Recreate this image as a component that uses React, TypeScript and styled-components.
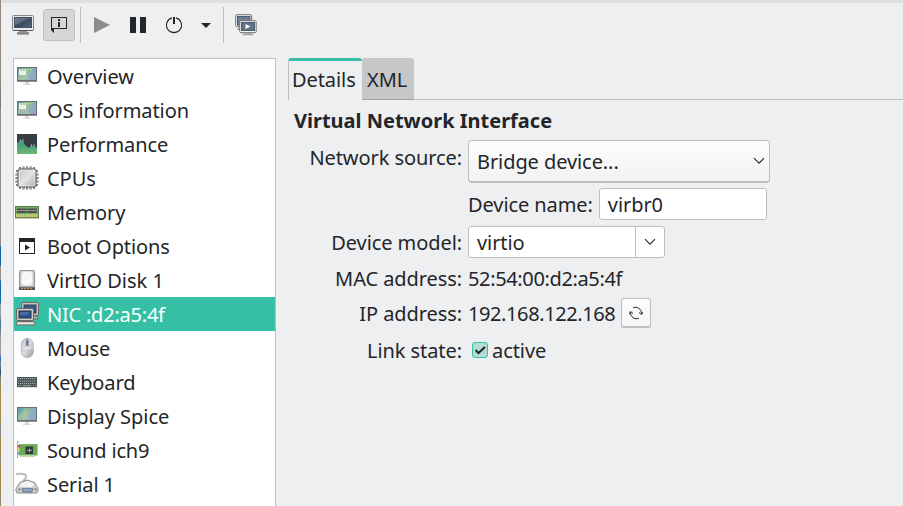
import React from "react";
import styled, { createGlobalStyle } from "styled-components";

const ink = "#232629";
const edge = "#bcbec0";
const accent = "#35bfa4";

const GlobalStyle = createGlobalStyle`
  * { box-sizing: border-box; }
  body { margin: 0; background: #eeeff1; overflow: hidden; }
`;

const Window = styled.div`
  display: grid;
  grid-template-columns: 1px 1fr;
  width: 903px;
  height: 506px;
  overflow: hidden;
  background: #eeeff1;
  color: ${ink};
  font: 20px/34px "Noto Sans", sans-serif;
`;

const DesktopSliver = styled.div`
  background: linear-gradient(
    #94877b 0 85px, #7b7470 105px, #8e8e90 110px 246px, #0c64a0 247px 265px,
    #969188 266px 280px, #1264a8 281px 303px, #9a9da2 304px 316px, #486f92 322px,
    #a09c99 340px 354px, #1b66b8 358px, #72849a 364px, #1f4a73 373px, #8d8778 378px,
    #a08b48 389px 422px, #8f8787 427px 436px, #a18745 440px 454px, #8b8688 458px, #a18745 466px 480px,
    #a18745 492px, #8f8787 497px, #a18745 506px
  );
`;

const Content = styled.div`
  display: flex;
  flex-direction: column;
  min-width: 0;
  border-top: 3px solid #dedfe1;
`;

const Toolbar = styled.div`
  display: flex;
  align-items: flex-start;
  height: 55px;
  padding: 4px 0 0 6px;
`;

const ToolButton = styled.button<{ $pressed?: boolean; $width?: number }>`
  display: flex;
  align-items: center;
  justify-content: center;
  width: ${(p) => p.$width ?? 32}px;
  height: 32px;
  margin: 2px 0;
  padding: 0;
  border: 1px solid ${(p) => (p.$pressed ? edge : "transparent")};
  border-radius: 3px;
  background: ${(p) => (p.$pressed ? "#d5d6d8" : "transparent")};
  svg { flex: none; }
`;

const ViewSwitch = styled.div`
  display: flex;
  gap: 4px;
`;

const Divider = styled.div<{ $left: number; $right: number }>`
  width: 1px;
  height: 36px;
  margin: 0 ${(p) => p.$right}px 0 ${(p) => p.$left}px;
  background: ${edge};
`;

const Panes = styled.div`
  display: grid;
  grid-template-columns: 263px 1fr;
  column-gap: 12px;
  flex: 1;
  min-height: 0;
  padding-left: 12px;
`;

const HardwareList = styled.ul`
  height: 460px;
  margin: 0;
  padding: 0;
  list-style: none;
  background: #fff;
  border: 1px solid ${edge};
  border-bottom: 0;
`;

const HardwareRow = styled.li<{ $selected?: boolean }>`
  display: flex;
  align-items: center;
  gap: 8px;
  height: 34px;
  padding-left: 1px;
  white-space: nowrap;
  color: ${(p) => (p.$selected ? "#fff" : ink)};
  background: ${(p) => (p.$selected ? accent : "transparent")};
  svg { flex: none; }
`;

const RowLabel = styled.span<{ $tracking?: number }>`
  padding-top: 2px;
  letter-spacing: ${(p) => p.$tracking ?? -0.04}px;
`;

const Details = styled.div`
  min-width: 0;
`;

const TabStrip = styled.div`
  display: flex;
  height: 42px;
`;

const TabFiller = styled.div`
  flex: 1;
  border-bottom: 1px solid ${edge};
`;

const Tab = styled.div<{ $active?: boolean; $width: number }>`
  width: ${(p) => p.$width}px;
  height: 42px;
  padding-top: ${(p) => (p.$active ? 2 : 5)}px;
  padding-left: 5px;
  white-space: nowrap;
  border-radius: 3px 3px 0 0;
  ${(p) =>
    p.$active
      ? `border-top: 3px solid ${accent}; border-left: 1px solid ${edge}; padding-left: 3px; letter-spacing: -0.08px;`
      : `background: #c6c7c9; border-bottom: 1px solid #a2a4a6;`}
`;

const Heading = styled.h1`
  margin: 4px 0 2px 6px;
  font-size: 20px;
  line-height: 34px;
  font-weight: 700;
`;

const Form = styled.div`
  display: grid;
  grid-template-columns: 174px 1fr;
  grid-template-rows: 42px 32px 32px 28px 30px 32px;
  gap: 6px;
  letter-spacing: -0.08px;
`;

const Label = styled.label<{ $lift?: number }>`
  justify-self: end;
  align-self: center;
  white-space: nowrap;
  line-height: 28px;
  padding-top: ${(p) => (p.$lift ? 0 : 2)}px;
  padding-bottom: ${(p) => p.$lift ?? 0}px;
`;

const Field = styled.div`
  display: flex;
  align-items: center;
  white-space: nowrap;
`;

const Value = styled.span<{ $tracking?: number }>`
  padding-top: 2px;
  letter-spacing: ${(p) => p.$tracking ?? -0.08}px;
`;

const Combo = styled.div`
  display: flex;
  align-items: center;
  justify-content: space-between;
  width: 302px;
  height: 43px;
  padding: 0 4px 0 8px;
  border: 1px solid ${edge};
  border-bottom-width: 2px;
  border-radius: 4px;
  background: linear-gradient(#fdfdfd, #f2f2f3);
`;

const TextBox = styled.div<{ $width: number; $left?: number }>`
  display: flex;
  align-items: center;
  width: ${(p) => p.$width}px;
  height: 32px;
  margin-left: ${(p) => p.$left ?? 0}px;
  padding-left: 8px;
  border: 1px solid ${edge};
  border-radius: 3px;
  background: #fff;
`;

const EditPart = styled.div`
  width: 158px;
  padding-top: 2px;
`;

const DropPart = styled.div`
  display: flex;
  align-items: center;
  justify-content: center;
  width: 29px;
  height: 30px;
  border-left: 1px solid ${edge};
`;

const RefreshButton = styled.button`
  display: flex;
  align-items: center;
  justify-content: center;
  width: 30px;
  height: 30px;
  margin-left: 6px;
  padding: 0;
  border: 1px solid ${edge};
  border-bottom-width: 2px;
  border-radius: 3px;
  background: linear-gradient(#fdfdfd, #f5f5f6);
`;

const CheckBox = styled.span`
  display: flex;
  width: 16px;
  height: 16px;
  margin: 0 4px;
  border: 1px solid ${accent};
  border-radius: 3px;
  background: #b1ddd5;
`;

const Chevron = () => (
  <svg width="12" height="8" viewBox="0 0 12 8" fill="none" stroke={ink}>
    <path d="M1 1.2 6 6.2 11 1.2" strokeWidth="1.05" />
  </svg>
);

const ConsoleIcon = () => (
  <svg width="22" height="20" viewBox="0 0 22 20">
    <defs>
      <linearGradient id="screen" x2="1" y2="1">
        <stop stopColor="#65758a" /><stop offset=".5" stopColor="#3c4a5e" /><stop offset="1" stopColor="#56677e" />
      </linearGradient>
    </defs>
    <rect x=".5" y=".5" width="21" height="15" rx="1" fill="#e9e9e7" stroke="#85868a" />
    <rect x="2.5" y="2.5" width="17" height="10" fill="url(#screen)" stroke="#435066" />
    <path d="M3 3h16L3 10z" fill="#8b9aad" opacity=".35" />
    <path d="M1 15.5h20" stroke="#55575b" />
    <path d="M7 16h8v1h2v2H5v-2h2z" fill="#92938f" />
    <path d="M5 19h12" stroke="#6c6e6c" />
  </svg>
);

const InfoIcon = () => (
  <svg width="16" height="16" viewBox="0 0 16 16" fill={ink}>
    <path d="M0 0h16v12H3v4L0 13V12zM1 1v10h14V1z" fillRule="evenodd" />
    <path d="M7 2h2v2H7zM7 5h2v5H7z" />
  </svg>
);

const PowerIcon = () => (
  <svg width="16" height="17" viewBox="0 0 16 17" fill="none" stroke={ink}>
    <path d="M6 .9A7.5 7.5 0 1 0 10 .9" strokeWidth="1.1" />
    <path d="M8 0v7" strokeWidth="2" />
  </svg>
);

const ScreensIcon = () => (
  <svg width="22" height="22" viewBox="0 0 22 22">
    <rect x=".7" y=".7" width="16" height="12" rx="1.2" fill="#eee" stroke="#77736f" />
    <rect x="2.5" y="2.5" width="12.5" height="8.5" fill="#6b7e93" stroke="#4c5c71" />
    <path d="M3 14h3v2H2v-1z" fill="#a9a9a7" />
    <rect x="4.7" y="6.7" width="16.5" height="12" rx="1.2" fill="#f2f2ef" stroke="#77736f" />
    <rect x="6.5" y="8.5" width="13" height="8" fill="#617287" stroke="#4c5c71" />
    <path d="M10.5 10v5l5-2.5z" fill="#fff" />
    <path d="M10 19h6v1h2v1H8v-1h2z" fill="#b5b5b2" stroke="#8a8a87" strokeWidth=".5" />
  </svg>
);

/* The landscape monitor shared by the overview, OS and display entries. */
const MonitorIcon = ({ tiles }: { tiles?: boolean }) => (
  <svg width="24" height="24" viewBox="0 0 24 24">
    <defs>
      <linearGradient id="wall" x2="1" y2="1">
        <stop stopColor="#66a5ae" /><stop offset=".4" stopColor="#9cc0a0" />
        <stop offset=".7" stopColor="#8aacc9" /><stop offset="1" stopColor="#9da3c6" />
      </linearGradient>
    </defs>
    <path d="M2 3h20v15H2z" fill="#686e74" />
    <path d="M3 4h18v12H3z" fill="url(#wall)" />
    <path d="M3 4h6l-6 8z" fill="#559fae" opacity=".5" />
    <path d="m12 4 9 9V4z" fill="#7ba6c4" opacity=".5" />
    <path d="m10 5-4 11h9z" fill="#b9cd9b" opacity=".5" />
    {tiles && (
      <>
        <path d="M4 5h7v6H4z" fill="#edf1e6" />
        <path d="M5 5h2v2H5z" fill="#f0ad84" />
        <path d="M8 5h2v2H8z" fill="#8fd0b8" />
        <path d="M12 4.500h2v2h-2zM15 4.500h2v2h-2z" fill="#a5cf78" />
      </>
    )}
    <path d="M2 17.500h20" stroke="#8b8f93" />
    <path d="M10 18h4v2h2v1H8v-1h2z" fill="#d5d7d9" />
  </svg>
);

const GraphIcon = () => (
  <svg width="24" height="24" viewBox="0 0 24 24">
    <defs>
      <linearGradient id="hill" x2="0" y2="1"><stop stopColor="#3f9383" /><stop offset="1" stopColor="#6bb86d" /></linearGradient>
    </defs>
    <path d="M2 2h20v20H2z" fill="#373e43" />
    <path d="M2 11 4 9.500 6 8.500 8 9l2 4 4 3 2-2h3l3 2v6H2z" fill="url(#hill)" />
    <path d="M5.500 7v3M8 7v3M16.500 12v3M19 12v3" stroke="#a6c1b5" strokeWidth=".8" />
  </svg>
);

const ChipIcon = () => (
  <svg width="24" height="24" viewBox="0 0 24 24">
    <defs>
      <linearGradient id="die" x2="1" y2="1"><stop stopColor="#c4c4c4" /><stop offset=".5" stopColor="#e4e4e4" /><stop offset="1" stopColor="#a8a8a8" /></linearGradient>
    </defs>
    <path d="M5 1v22M8.500 .500v23M12 .500v23M15.500 .500v23M19 1v22M1 5h22M.500 8.500h23M.500 12h23M.500 15.500h23M1 19h22" stroke="#5c5c5c" strokeWidth="2" />
    <path d="M5 1v22M8.500 .500v23M12 .500v23M15.500 .500v23M19 1v22M1 5h22M.500 8.500h23M.500 12h23M.500 15.500h23M1 19h22" stroke="#c6c6c6" strokeWidth=".7" />
    <rect x="3" y="3" width="18" height="18" rx="1" fill="url(#die)" stroke="#686868" />
    <rect x="4.500" y="4.500" width="15" height="15" rx="1" fill="none" stroke="#efefef" opacity=".6" />
  </svg>
);

const MemoryIcon = () => (
  <svg width="24" height="24" viewBox="0 0 24 24">
    <rect x=".5" y="6.500" width="23" height="11" fill="#77a965" stroke="#5b7f50" />
    <path d="M2 8.500h20v4.500H2z" fill="#4d514b" />
    <path d="M2 10.500h9.500M12.500 10.500H22" stroke="#929292" />
    <path d="M12 8v6" stroke="#46c451" />
    <path d="M1 15.500h22" stroke="#d8d477" strokeWidth="3" strokeDasharray="1.500 .7" />
    <path d="M0 18h24" stroke="#8c8c51" />
  </svg>
);

const BootIcon = () => (
  <svg width="24" height="24" viewBox="0 0 24 24" fill={ink}>
    <path fillRule="evenodd" d="M4 4h16v16H4zM5 8v11h14V8z" />
    <path d="M10 10.500v6l5-3z" />
  </svg>
);

const DiskIcon = () => (
  <svg width="24" height="24" viewBox="0 0 24 24">
    <path d="M4 18.500h16V22H4z" fill="#4d4e50" />
    <path d="M6 20.700h12" stroke="#d8a255" strokeDasharray="2 1" />
    <rect x="4.500" y="2.500" width="15" height="16.500" rx="1" fill="#c7c9cb" stroke="#919497" />
    <rect x="6.500" y="3.500" width="11" height="14" rx="3" fill="#f6f7f7" stroke="#dfe0e1" />
  </svg>
);

const NicIcon = () => (
  <svg width="24" height="24" viewBox="0 0 24 24">
    <path d="M9 14h13l1 3H8z" fill="#b6b3ab" stroke="#706e69" />
    <rect x="6.500" y=".500" width="17" height="13" rx="1.500" fill="#c8c6c0" stroke="#6b6964" />
    <rect x="9" y="3" width="12" height="8" fill="#36578e" stroke="#343e4d" />
    <path d="M2 19.500h17l1 3.500H1z" fill="#d0cec8" stroke="#706e69" />
    <path d="M7 18h7v2H7z" fill="#676660" />
    <rect x="1.500" y="6.500" width="17" height="12" rx="1.500" fill="#d0cec8" stroke="#6b6964" />
    <rect x="4" y="9" width="12" height="7" fill="#2b5190" stroke="#252f42" />
    <path d="M5 10h10l-4 3H5z" fill="#8296bc" opacity=".4" />
    <path d="M2 21.500h17" stroke="#e8e7e2" />
  </svg>
);

const MouseIcon = () => (
  <svg width="24" height="24" viewBox="0 0 24 24">
    <defs>
      <linearGradient id="shell" x2="1" y2="1"><stop stopColor="#c4c7ca" /><stop offset=".5" stopColor="#d9dadd" /><stop offset="1" stopColor="#939699" /></linearGradient>
    </defs>
    <rect x="6.300" y="2.300" width="12" height="19.500" rx="6" fill="url(#shell)" stroke="#a0a3a6" strokeWidth=".6" />
    <path d="M7 11c3 2 8 2 11 0" fill="none" stroke="#eeeff0" />
    <path d="M12.200 2.500v2" stroke="#7a7e83" />
    <rect x="11" y="4" width="2.500" height="6" rx="1" fill="#63788a" />
  </svg>
);

const KeyboardIcon = () => (
  <svg width="24" height="24" viewBox="0 0 24 24">
    <path d="M2 7h20v10H2z" fill="#4a5658" />
    <path d="M3 8.500h18M3 11h18M3 13.500h18" stroke="#a0aaab" strokeDasharray="1.200 .800" />
    <path d="M3 15.700h3M18 15.700h3" stroke="#8e999b" strokeDasharray="1.200 .800" />
    <path d="M8 15.700h8" stroke="#a0aaab" />
    <path d="M2 17.500h20" stroke="#d8dadb" />
  </svg>
);

const SoundIcon = () => (
  <svg width="24" height="24" viewBox="0 0 24 24">
    <path d="M2.500 3v17M2 4h2" stroke="#a4abad" fill="none" />
    <path d="M4 6h18.500v11.500H4z" fill="#6cab50" />
    <path d="M5 18h15v1H5z" fill="#d9cd9a" />
    <path d="M4 6.500h18.500" stroke="#7fb76f" />
    <path d="M3 7h2v2.500H3z" fill="#e2327a" />
    <path d="M3 10.500h2V13H3z" fill="#e3bd3d" />
    <path d="M3 14h2v2.500H3z" fill="#44a4d5" />
    <rect x="10.500" y="8.500" width="7.500" height="7.500" fill="#2d3a3c" />
    <path d="M12 12.300h5M14.500 10.500v3.500" stroke="#b9c8c5" strokeWidth=".8" />
  </svg>
);

const SerialIcon = () => (
  <svg width="24" height="24" viewBox="0 0 24 24">
    <path d="M1 2c9-1 12 1 9 5-1 1-2 2-2 4" fill="none" stroke="#a0a0a0" strokeWidth="2" />
    <path d="M1 2c9-1 12 1 9 5-1 1-2 2-2 4" fill="none" stroke="#e6e6e6" strokeWidth=".8" />
    <path d="M5 10.500 13 8l7 3 3.400 6.500-1.500 3.500H2L.600 17.500z" fill="#d2d2d1" stroke="#8a8a8a" />
    <path d="M6 11 13 9l6.500 3-3 3H5z" fill="#f4f4f4" />
    <path d="M7 16.500h11l-1 3.500H8z" fill="#7097c8" stroke="#68788a" strokeWidth=".8" />
    <path d="M9 18h7" stroke="#c9dcf0" strokeDasharray="1 1" />
    <circle cx="4.500" cy="17.500" r="1.200" fill="#888" />
    <circle cx="20.500" cy="17.500" r="1.200" fill="#888" />
  </svg>
);

const hardware: { label: string; icon: React.ReactNode; selected?: boolean; tracking?: number }[] = [
  { label: "Overview", icon: <MonitorIcon tiles /> },
  { label: "OS information", icon: <MonitorIcon tiles />, tracking: -0.1 },
  { label: "Performance", icon: <GraphIcon />, tracking: -0.08 },
  { label: "CPUs", icon: <ChipIcon /> },
  { label: "Memory", icon: <MemoryIcon /> },
  { label: "Boot Options", icon: <BootIcon />, tracking: -0.1 },
  { label: "VirtIO Disk 1", icon: <DiskIcon />, tracking: 0 },
  { label: "NIC :d2:a5:4f", icon: <NicIcon />, selected: true, tracking: -0.22 },
  { label: "Mouse", icon: <MouseIcon /> },
  { label: "Keyboard", icon: <KeyboardIcon />, tracking: -0.1 },
  { label: "Display Spice", icon: <MonitorIcon /> },
  { label: "Sound ich9", icon: <SoundIcon />, tracking: -0.15 },
  { label: "Serial 1", icon: <SerialIcon />, tracking: -0.1 },
];

export default function App() {
  return (
    <>
      <GlobalStyle />
      <Window>
        <DesktopSliver />
        <Content>
          <Toolbar>
            <ViewSwitch>
              <ToolButton><ConsoleIcon /></ToolButton>
              <ToolButton $pressed><InfoIcon /></ToolButton>
            </ViewSwitch>
            <Divider $left={5} $right={5} />
            <ToolButton>
              <svg width="16" height="16" viewBox="0 0 16 16" fill="#8b8c8e"><path d="M0 0v16l16-8z" /></svg>
            </ToolButton>
            <ToolButton $width={40}>
              <svg width="16" height="16" viewBox="0 0 16 16" fill={ink}><path d="M0 0h6v16H0zM10 0h6v16h-6z" /></svg>
            </ToolButton>
            <ToolButton><PowerIcon /></ToolButton>
            <ToolButton>
              <svg width="10" height="5" viewBox="0 0 10 5" fill={ink}><path d="M0 0h10L5 5z" /></svg>
            </ToolButton>
            <Divider $left={1} $right={6} />
            <ToolButton><ScreensIcon /></ToolButton>
          </Toolbar>
          <Panes>
            <HardwareList>
              {hardware.map((h) => (
                <HardwareRow key={h.label} $selected={h.selected}>
                  {h.icon}
                  <RowLabel $tracking={h.tracking}>{h.label}</RowLabel>
                </HardwareRow>
              ))}
            </HardwareList>
            <Details>
              <TabStrip>
                <Tab $active $width={74}>Details</Tab>
                <Tab $width={52}>XML</Tab>
                <TabFiller />
              </TabStrip>
              <Heading>Virtual Network Interface</Heading>
              <Form>
                <Label $lift={6}>Network source:</Label>
                <Field>
                  <Combo><Value>Bridge device...</Value><Chevron /></Combo>
                </Field>
                <span />
                <Field>
                  <Value>Device name:</Value>
                  <TextBox $width={168} $left={6}><Value>virbr0</Value></TextBox>
                </Field>
                <Label>Device model:</Label>
                <Field>
                  <TextBox $width={197}>
                    <EditPart>virtio</EditPart>
                    <DropPart><Chevron /></DropPart>
                  </TextBox>
                </Field>
                <Label>MAC address:</Label>
                <Field><Value $tracking={-0.36}>52:54:00:d2:a5:4f</Value></Field>
                <Label>IP address:</Label>
                <Field>
                  <Value $tracking={-0.4}>192.168.122.168</Value>
                  <RefreshButton>
                    <svg width="14" height="14" viewBox="0 0 14 14" fill="none" stroke={ink}>
                      <path d="M4 1.800A6 6 0 0 1 12.500 7.500M10 12.200A6 6 0 0 1 1.500 6.500" />
                      <path d="m10 6.500 2.500 2L14 6M0 8l1.500-2.500L4 7.500" />
                    </svg>
                  </RefreshButton>
                </Field>
                <Label>Link state:</Label>
                <Field>
                  <CheckBox>
                    <svg width="14" height="14" viewBox="0 0 14 14" fill="none" stroke={ink} strokeWidth="2">
                      <path d="m2.500 7 3 3L12 4" />
                    </svg>
                  </CheckBox>
                  <Value>active</Value>
                </Field>
              </Form>
            </Details>
          </Panes>
        </Content>
      </Window>
    </>
  );
}
